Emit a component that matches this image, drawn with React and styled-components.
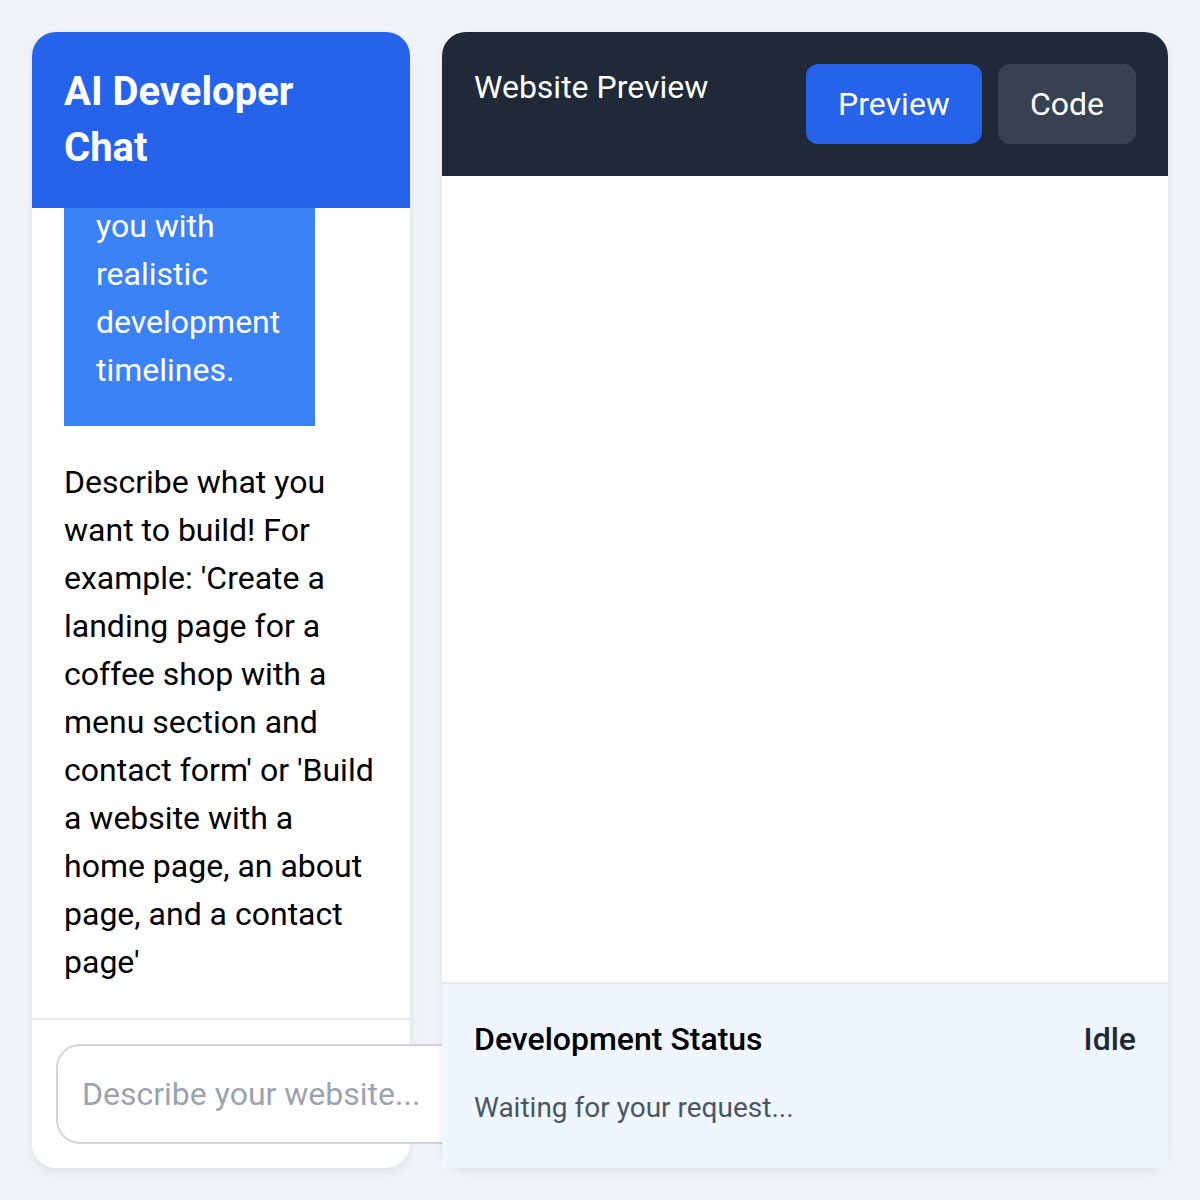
import React, {useEffect, useRef} from "react";
import styled, {createGlobalStyle} from "styled-components";

const GlobalStyle = createGlobalStyle`
  html, body {
    margin: 0;
    padding: 0;
    background: #f0f4f8;
    font-family: Roboto, "Liberation Sans", sans-serif;
  }
  * {
    box-sizing: border-box;
  }
`;

const Page = styled.div`
  display: flex;
  gap: 32px;
  padding: 32px;
  height: 1200px;
`;

const ChatPanel = styled.div`
  width: 378px;
  flex-shrink: 0;
  display: flex;
  flex-direction: column;
  background: #ffffff;
  border-radius: 24px;
  box-shadow: 0 4px 10px rgba(15, 23, 42, 0.08);
`;

const ChatHeader = styled.div`
  background: #2563eb;
  color: #ffffff;
  padding: 32px;
  border-radius: 24px 24px 0 0;
`;

const ChatTitle = styled.h1`
  margin: 0;
  font-size: 40px;
  line-height: 56px;
  font-weight: 700;
`;

const Messages = styled.div`
  flex: 1;
  overflow-y: auto;
  padding: 32px;
  display: flex;
  flex-direction: column;
  gap: 32px;
  scrollbar-width: none;
  &::-webkit-scrollbar {
    display: none;
  }
`;

const Message = styled.div`
  font-size: 32px;
  line-height: 48px;
  align-self: flex-start;
  flex-shrink: 0;
  max-width: ${props => (props.fromAi ? "80%" : "100%")};
  padding: ${props => (props.fromAi ? "32px" : "0")};
  background: ${props => (props.fromAi ? "#3b82f6" : "transparent")};
  color: ${props => (props.fromAi ? "#ffffff" : "#000000")};
`;

const InputBar = styled.div`
  border-top: 2px solid #e5e7eb;
  padding: 24px;
  display: flex;
`;

const ChatInput = styled.input`
  flex-shrink: 0;
  width: 440px;
  height: 100px;
  padding: 0 24px;
  border: 2px solid #d1d5db;
  border-radius: 24px;
  font-family: Roboto, "Liberation Sans", sans-serif;
  font-size: 32px;
  color: #111827;
  background: #ffffff;
  outline: none;
  &::placeholder {
    color: #9ca3af;
  }
`;

const PreviewPanel = styled.div`
  flex: 1;
  display: flex;
  flex-direction: column;
  background: #ffffff;
  border-radius: 24px;
  box-shadow: 0 4px 10px rgba(15, 23, 42, 0.08);
  position: relative;
`;

const PreviewHeader = styled.div`
  background: #1f2937;
  color: #ffffff;
  border-radius: 24px 24px 0 0;
  padding: 32px;
  display: flex;
  justify-content: space-between;
  align-items: flex-start;
`;

const PreviewTitle = styled.h2`
  margin: 0;
  font-size: 32px;
  line-height: 46px;
  font-weight: 400;
`;

const Tabs = styled.div`
  display: flex;
  gap: 16px;
`;

const Tab = styled.button`
  border: none;
  border-radius: 12px;
  padding: 16px 32px;
  font-family: Roboto, "Liberation Sans", sans-serif;
  font-size: 32px;
  line-height: 48px;
  color: #ffffff;
  background: ${props => (props.active ? "#2563eb" : "#374151")};
  cursor: pointer;
`;

const Frame = styled.div`
  flex: 1;
  background: #ffffff;
`;

const StatusBox = styled.div`
  background: #eff6ff;
  border-top: 2px solid #e5e7eb;
  padding: 31px 32px 39px;
`;

const StatusRow = styled.div`
  display: flex;
  justify-content: space-between;
  align-items: center;
  margin-bottom: 24px;
`;

const StatusLabel = styled.div`
  font-size: 32px;
  line-height: 48px;
  font-weight: 500;
  color: ${props => props.color || "#000000"};
`;

const StatusText = styled.div`
  font-size: 28px;
  line-height: 42px;
  color: #4b5563;
`;

const messages = [
  {
    fromAi: true,
    text: "Hi! I'm your AI developer. I'll plan and build your site, providing you with realistic development timelines."
  },
  {
    fromAi: false,
    text: "Describe what you want to build! For example: 'Create a landing page for a coffee shop with a menu section and contact form' or 'Build a website with a home page, an about page, and a contact page'"
  }
];

export default function App() {
  const listRef = useRef(null);

  useEffect(() => {
    // keep the newest message in view
    const list = listRef.current;
    if (list) list.scrollTop = list.scrollHeight;
  }, []);

  return (
    <>
      <GlobalStyle/>
      <Page>
        <ChatPanel>
          <ChatHeader>
            <ChatTitle>AI Developer Chat</ChatTitle>
          </ChatHeader>
          <Messages ref={listRef}>
            {messages.map((m, i) => (
              <Message key={i} fromAi={m.fromAi}>
                {m.text}
              </Message>
            ))}
          </Messages>
          <InputBar>
            <ChatInput placeholder="Describe your website..."/>
          </InputBar>
        </ChatPanel>
        <PreviewPanel>
          <PreviewHeader>
            <PreviewTitle>Website Preview</PreviewTitle>
            <Tabs>
              <Tab active>Preview</Tab>
              <Tab>Code</Tab>
            </Tabs>
          </PreviewHeader>
          <Frame/>
          <StatusBox>
            <StatusRow>
              <StatusLabel>Development Status</StatusLabel>
              <StatusLabel color="#1f2937">Idle</StatusLabel>
            </StatusRow>
            <StatusText>Waiting for your request...</StatusText>
          </StatusBox>
        </PreviewPanel>
      </Page>
    </>
  );
}
